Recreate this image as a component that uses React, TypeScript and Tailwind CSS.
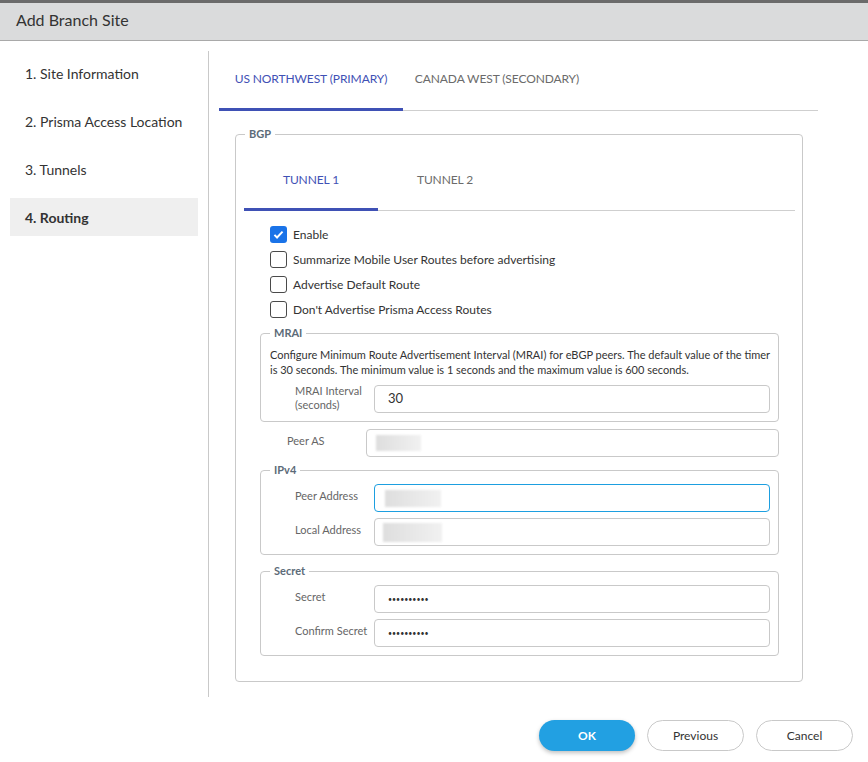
import React from 'react';

interface GroupProps {
  title: string;
  className?: string;
  children: React.ReactNode;
}

// 带标题的分组框
const Group: React.FC<GroupProps> = ({ title, className = '', children }) => (
  <fieldset className={`rounded-[4px] border border-[#c9c9c9] ${className}`}>
    <legend className="ml-[9px] px-[4px] text-[11px] leading-[14px] font-bold text-[#5c6b78]">{title}</legend>
    {children}
  </fieldset>
);

const Blur: React.FC<{ className: string }> = ({ className }) => (
  <div className={`bg-gradient-to-r from-[#dedede] to-[#f1f1f1] blur-[1px] ${className}`} />
);

const Input: React.FC<{ focused?: boolean; children?: React.ReactNode; pad?: string }> = ({
  focused = false,
  children,
  pad = 'px-[13px]',
}) => (
  <div
    className={`flex h-[28px] flex-1 items-center rounded-[4px] border text-[13px] text-[#333] ${
      focused ? 'border-[#1d9fe0]' : 'border-[#c9c9c9]'
    } ${pad}`}
  >
    {children}
  </div>
);

const Row: React.FC<{ label: React.ReactNode; children: React.ReactNode }> = ({ label, children }) => (
  <div className="flex items-center">
    <div className="-mt-[4px] w-[104px] pl-[25px] text-[11px] leading-[14px] text-[#666]">{label}</div>
    {children}
  </div>
);

const Dots = () => <span className="text-[7px] text-[#333]">••••••••••</span>;

const Check: React.FC<{ checked?: boolean; label: string }> = ({ checked = false, label }) => (
  <div className="flex h-[25px] items-center gap-[6px]">
    {checked ? (
      <div className="flex h-[17px] w-[17px] items-center justify-center rounded-[3px] bg-[#1a73e8]">
        <svg width="13" height="13" viewBox="0 0 16 16">
          <path d="M3 8.5l3.2 3.2L13 4.5" fill="none" stroke="white" strokeWidth="2.4" />
        </svg>
      </div>
    ) : (
      <div className="h-[17px] w-[17px] rounded-[3px] border border-[#4a4a4a] bg-white" />
    )}
    <span className="text-[12px] text-[#333]">{label}</span>
  </div>
);

const NAV = ['1. Site Information', '2. Prisma Access Location', '3. Tunnels', '4. Routing'];

export default function App() {
  return (
    <div className="h-[762px] w-[868px] overflow-hidden bg-white font-['Lato','Noto_Sans',sans-serif]">
      <div className="h-[3px] bg-[#6b6b6b]" />
      <div className="flex h-[38px] items-center border-b border-[#a9a9a9] bg-[#dadbdc] px-[16px] pb-[3px] text-[16px] text-[#333]">
        Add Branch Site
      </div>

      <div className="flex pt-[10px]">
        {/* 左侧步骤导航 */}
        <div className="flex h-[646px] w-[209px] flex-col gap-[10px] border-r border-[#c9c9c9] px-[10px] pt-[3px]">
          {NAV.map((item, i) => (
            <div
              key={item}
              className={`flex h-[38px] w-[188px] items-center pl-[15px] text-[14px] text-[#333] ${
                i === 3 ? 'bg-[#efefef] font-bold' : ''
              }`}
            >
              {item}
            </div>
          ))}
        </div>

        <div className="flex-1">
          <div className="ml-[10px] flex h-[60px] w-[599px] border-b border-[#cfcfcf]">
            <div className="-mb-px h-[60px] w-[184px] border-b-[3px] border-[#3f51b5] pt-[20px] text-center text-[12px] leading-[15px] tracking-[-0.1px] text-[#3f51b5]">
              US NORTHWEST (PRIMARY)
            </div>
            <div className="-mb-px h-[60px] w-[188px] pt-[20px] text-center text-[12px] leading-[15px] tracking-[-0.1px] text-[#6b6b6b]">
              CANADA WEST (SECONDARY)
            </div>
          </div>

          <Group title="BGP" className="ml-[26px] mt-[16px] w-[567px]">
            <div className="pb-[25px]">
              <div className="ml-[8px] mr-[7px] mt-[9px] flex h-[61px] border-b border-[#cfcfcf]">
                <div className="-mb-px h-[61px] w-[134px] border-b-[3px] border-[#3f51b5] pt-[22px] text-center text-[12px] leading-[15px] tracking-[-0.1px] text-[#3f51b5]">
                  TUNNEL 1
                </div>
                <div className="-mb-px h-[61px] w-[134px] pt-[22px] text-center text-[12px] leading-[15px] tracking-[-0.1px] text-[#6b6b6b]">
                  TUNNEL 2
                </div>
              </div>

              <div className="mt-[11px] pl-[34px]">
                <Check checked label="Enable" />
                <Check label="Summarize Mobile User Routes before advertising" />
                <Check label="Advertise Default Route" />
                <Check label="Don't Advertise Prisma Access Routes" />
              </div>

              <Group title="MRAI" className="ml-[24px] mr-[23px] mt-[4px]">
                <div className="pb-[8px] pl-[9px] pr-[8px] pt-[7px]">
                  <p className="whitespace-nowrap text-[11px] leading-[15px] text-[#333]">
                    Configure Minimum Route Advertisement Interval (MRAI) for eBGP peers. The default value of the timer
                    <br />
                    is 30 seconds. The minimum value is 1 seconds and the maximum value is 600 seconds.
                  </p>
                  <div className="mt-[8px] flex items-center">
                    <div className="-mt-[3px] w-[104px] pl-[25px] text-[11px] leading-[14px] text-[#666]">
                      MRAI Interval
                      <br />
                      (seconds)
                    </div>
                    <Input>30</Input>
                  </div>
                </div>
              </Group>

              <div className="ml-[24px] mr-[23px] mt-[7px] flex items-center">
                <div className="-mt-[5px] w-[106px] pl-[27px] text-[11px] leading-[14px] text-[#666]">Peer AS</div>
                <Input pad="px-[9px]">
                  <Blur className="h-[16px] w-[45px]" />
                </Input>
              </div>

              <Group title="IPv4" className="ml-[24px] mr-[23px] mt-[6px]">
                <div className="flex flex-col gap-[6px] pb-[8px] pl-[9px] pr-[8px] pt-[7px]">
                  <Row label="Peer Address">
                    <Input focused pad="px-[10px]">
                      <Blur className="h-[17px] w-[56px]" />
                    </Input>
                  </Row>
                  <Row label="Local Address">
                    <Input pad="px-[8px]">
                      <Blur className="h-[19px] w-[59px]" />
                    </Input>
                  </Row>
                </div>
              </Group>

              <Group title="Secret" className="ml-[24px] mr-[23px] mt-[9px]">
                <div className="flex flex-col gap-[6px] pb-[8px] pl-[9px] pr-[8px] pt-[7px]">
                  <Row label="Secret">
                    <Input>
                      <Dots />
                    </Input>
                  </Row>
                  <Row label="Confirm Secret">
                    <Input>
                      <Dots />
                    </Input>
                  </Row>
                </div>
              </Group>
            </div>
          </Group>
        </div>
      </div>

      <div className="flex justify-end gap-[12px] pr-[15px] pt-[23px]">
        <button className="h-[31px] w-[96px] rounded-full bg-[#22a0e2] text-[12px] font-bold text-white shadow-[0_2px_4px_rgba(0,0,0,0.25)]">
          OK
        </button>
        <button className="h-[31px] w-[97px] rounded-full border border-[#c9c9c9] bg-white text-[12px] text-[#333]">
          Previous
        </button>
        <button className="h-[31px] w-[97px] rounded-full border border-[#c9c9c9] bg-white text-[12px] text-[#333]">
          Cancel
        </button>
      </div>
    </div>
  );
}
